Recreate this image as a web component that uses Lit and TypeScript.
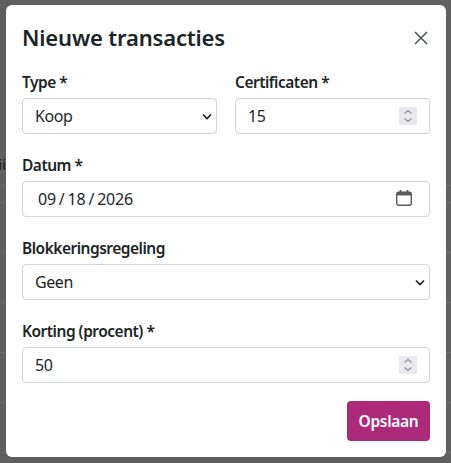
import { LitElement, html, css } from "lit";
import { customElement } from "lit/decorators.js";

@customElement("app-root")
export class AppRoot extends LitElement {
  static styles = css`
    :host {
      display: block;
      width: 451px;
      height: 463px;
      position: relative;
      overflow: hidden;
      background: #5f5f5f;
      font-family: "Noto Sans", sans-serif;
      color: #212529;
      box-sizing: border-box;
      padding: 5px 5px 6px 6px;
    }
    .line {
      position: absolute;
      left: 0;
      right: 0;
      height: 1px;
      background: #6b6b6b;
    }
    .peek {
      position: absolute;
      right: 445px;
      top: 153px;
      font-size: 15px;
      line-height: 22px;
      color: #1a1a1a;
      white-space: nowrap;
    }
    .modal {
      position: relative;
      height: 452px;
      box-sizing: border-box;
      background: #fff;
      border-radius: 6px;
      padding: 16px;
      display: flex;
      flex-direction: column;
    }
    .head {
      display: flex;
      justify-content: space-between;
      align-items: center;
      height: 33px;
      margin-bottom: 16px;
    }
    h1 {
      margin: 0;
      font-size: 22px;
      letter-spacing: -0.17px;
      line-height: 33px;
      font-weight: 600;
      color: #1b2426;
    }
    .close {
      width: 14px;
      height: 14px;
      margin-right: 2px;
      display: block;
    }
    .row {
      display: grid;
      grid-template-columns: 1fr 1fr;
      gap: 18px;
    }
    .field {
      display: flex;
      flex-direction: column;
      margin-bottom: 19px;
    }
    .field.tail {
      margin-bottom: 18px;
    }
    label {
      font-size: 15.5px;
      letter-spacing: -0.5px;
      line-height: 24px;
      font-weight: 600;
      color: #1b2426;
      margin-bottom: 4px;
    }
    .control {
      position: relative;
      height: 36px;
    }
    input,
    select {
      box-sizing: border-box;
      display: block;
      width: 100%;
      height: 36px;
      border: 1px solid #ced4da;
      border-radius: 4px;
      background-color: #fff;
      font: inherit;
      font-size: 16px;
      letter-spacing: -0.4px;
      color: #212529;
      padding: 0 12px;
      outline: none;
      margin: 0;
      appearance: none;
      -webkit-appearance: none;
      -moz-appearance: textfield;
    }
    input.date {
      padding-left: 15px;
      letter-spacing: -0.2px;
      word-spacing: -1px;
    }
    input::-webkit-inner-spin-button {
      -webkit-appearance: none;
      margin: 0;
    }
    .chev {
      position: absolute;
      right: 5px;
      top: 15px;
      width: 10px;
      height: 7px;
      pointer-events: none;
    }
    .spin {
      position: absolute;
      right: 13px;
      top: 9px;
      width: 18px;
      height: 18px;
      background: #e9e9ed;
      pointer-events: none;
    }
    .spin svg {
      display: block;
      width: 18px;
      height: 18px;
    }
    .cal {
      position: absolute;
      right: 18px;
      top: 9px;
      width: 16px;
      height: 16px;
      pointer-events: none;
    }
    .foot {
      display: flex;
      justify-content: flex-end;
      margin-top: auto;
    }
    button {
      height: 40px;
      width: 83px;
      border: none;
      border-radius: 4px;
      background: #ad2a7b;
      color: #fff;
      font: inherit;
      font-size: 15.5px;
      letter-spacing: -0.3px;
      font-weight: 600;
      padding: 0;
    }
  `;

  private chev() {
    return html`<svg class="chev" viewBox="0 0 10 7" fill="none" stroke="#1c1c1c" stroke-width="1.6">
      <path d="M1 1.5l4 4 4-4" />
    </svg>`;
  }

  private spin() {
    return html`<div class="spin">
      <svg viewBox="0 0 18 18" fill="none" stroke="#8f8f9d" stroke-width="1.3">
        <path d="M5.5 6.5L9 3.5l3.5 3M5.5 11.5L9 14.5l3.5-3" />
      </svg>
    </div>`;
  }

  render() {
    return html`
      ${[185, 202, 252, 302, 352, 402, 452].map(
        (y) => html`<div class="line" style="top:${y}px"></div>`
      )}
      <div class="peek">ii</div>
      <div class="modal">
        <div class="head">
          <h1>Nieuwe transacties</h1>
          <svg class="close" viewBox="0 0 14 14" fill="none" stroke="#4a5054" stroke-width="1.5">
            <path d="M1 1l12 12M13 1L1 13" />
          </svg>
        </div>
        <div class="row">
          <div class="field">
            <label>Type *</label>
            <div class="control">
              <select><option>Koop</option><option>Verkoop</option></select>
              ${this.chev()}
            </div>
          </div>
          <div class="field">
            <label>Certificaten *</label>
            <div class="control">
              <input type="number" value="15" />
              ${this.spin()}
            </div>
          </div>
        </div>
        <div class="field">
          <label>Datum *</label>
          <div class="control">
            <input class="date" type="text" value="09 / 18 / 2026" />
            <svg class="cal" viewBox="0 0 16 16" fill="none" stroke="#5b5b5b" stroke-width="1.4">
              <rect x="0.7" y="2.2" width="14.6" height="13.1" rx="2" />
              <path d="M0.7 4.2h14.6" stroke-width="2.6" />
              <path d="M4.5 0v2M11.5 0v2" stroke-width="1.8" />
            </svg>
          </div>
        </div>
        <div class="field">
          <label>Blokkeringsregeling</label>
          <div class="control">
            <select><option>Geen</option></select>
            ${this.chev()}
          </div>
        </div>
        <div class="field tail">
          <label>Korting (procent) *</label>
          <div class="control">
            <input type="number" value="50" />
            ${this.spin()}
          </div>
        </div>
        <div class="foot"><button>Opslaan</button></div>
      </div>
    `;
  }
}
